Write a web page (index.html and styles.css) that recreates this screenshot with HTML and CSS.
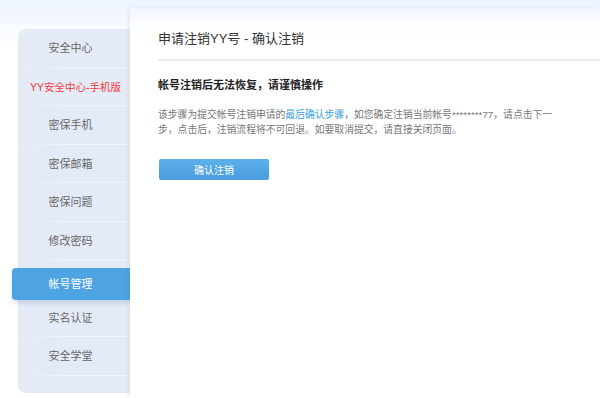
FILE: index.html
```html
<!DOCTYPE html>
<html lang="zh-CN">
<head>
    <meta charset="UTF-8">
    <meta name="viewport" content="width=device-width, initial-scale=1.0">
    <title>申请注销YY号 - 确认注销</title>
    <link rel="stylesheet" href="styles.css">
</head>
<body>
    <div class="page">
        <!-- left menu -->
        <ul class="side-nav">
            <li><a href="#">安全中心</a></li>
            <li class="mobile"><a href="#">YY安全中心-手机版</a></li>
            <li><a href="#">密保手机</a></li>
            <li><a href="#">密保邮箱</a></li>
            <li><a href="#">密保问题</a></li>
            <li><a href="#">修改密码</a></li>
            <li class="current"><a href="#">帐号管理</a></li>
            <li><a href="#">实名认证</a></li>
            <li><a href="#">安全学堂</a></li>
        </ul>

        <!-- main content -->
        <div class="main">
            <h1 class="main-title">申请注销YY号 - 确认注销</h1>
            <h2 class="warn">帐号注销后无法恢复，请谨慎操作</h2>
            <p class="desc">该步骤为提交帐号注销申请的<a href="#">最后确认步骤</a>，如您确定注销当前帐号********77，请点击下一步，点击后，注销流程将不可回退。如要取消提交，请直接关闭页面。</p>
            <button class="btn-confirm">确认注销</button>
        </div>
    </div>
</body>
</html>
```

FILE: styles.css
```css
body {
    margin: 0;
    font-family: "Liberation Sans", "Noto Sans CJK SC", sans-serif;
    background: linear-gradient(#edf4fe, #ffffff 45px) no-repeat;
    background-color: #fff;
    height: 398px;
    overflow: hidden;
}
.page {
    display: flex;
    align-items: flex-start;
}
.side-nav {
    list-style: none;
    margin: 29px 0 0 18px;
    padding: 0 0 17px 0;
    width: 112px;
    background-color: #e4ebf6;
    border-radius: 8px 0 0 8px;
}
.side-nav li {
    box-sizing: border-box;
    height: 38.5px;
    border-bottom: 1px solid;
    border-image: linear-gradient(to right, rgba(240, 245, 251, 0), #eff3fa 40%) 1;
}
.side-nav a {
    display: block;
    line-height: 39px;
    padding-right: 7px;
    text-align: center;
    font-size: 11px;
    color: #666;
    text-decoration: none;
}
.side-nav .mobile a {
    color: #f2383a;
    font-size: 10.5px;
    padding-right: 0;
    padding-left: 3px;
}
.side-nav .current {
    border-bottom: none;
    padding-top: 8px;
}
.side-nav .current a {
    height: 32px;
    line-height: 32px;
    margin-left: -6px;
    padding-right: 1px;
    color: #fff;
    background-color: #4ea3e3;
    border-radius: 4px 0 0 4px;
    box-shadow: 0 3px 5px rgba(40, 90, 150, 0.18);
}
.main {
    flex: 1;
    margin-top: 8px;
    height: 390px;
    box-sizing: border-box;
    padding: 21px 0 0 28px;
    background: linear-gradient(rgba(255, 255, 255, 0.1), #ffffff 32px);
    box-shadow: -2px 0 4px rgba(60, 80, 110, 0.08);
}
.main-title {
    margin: 0;
    padding-bottom: 10px;
    font-size: 13px;
    line-height: 20px;
    font-weight: normal;
    color: #333;
    border-bottom: 2px solid #ececec;
}
.warn {
    margin: 16px 0 0;
    font-size: 11px;
    line-height: 16px;
    color: #222;
}
.desc {
    width: 398px;
    margin: 14px 0 0;
    font-size: 9.8px;
    line-height: 15px;
    color: #777;
}
.desc a {
    color: #3a9fe2;
    text-decoration: none;
}
.btn-confirm {
    display: block;
    margin: 22px 0 0 1px;
    width: 110px;
    height: 21px;
    padding: 0;
    border: none;
    border-radius: 2px;
    background: linear-gradient(#5cb0ea, #4a9cdf);
    color: #fff;
    font-family: inherit;
    font-size: 10px;
    cursor: pointer;
}
```
